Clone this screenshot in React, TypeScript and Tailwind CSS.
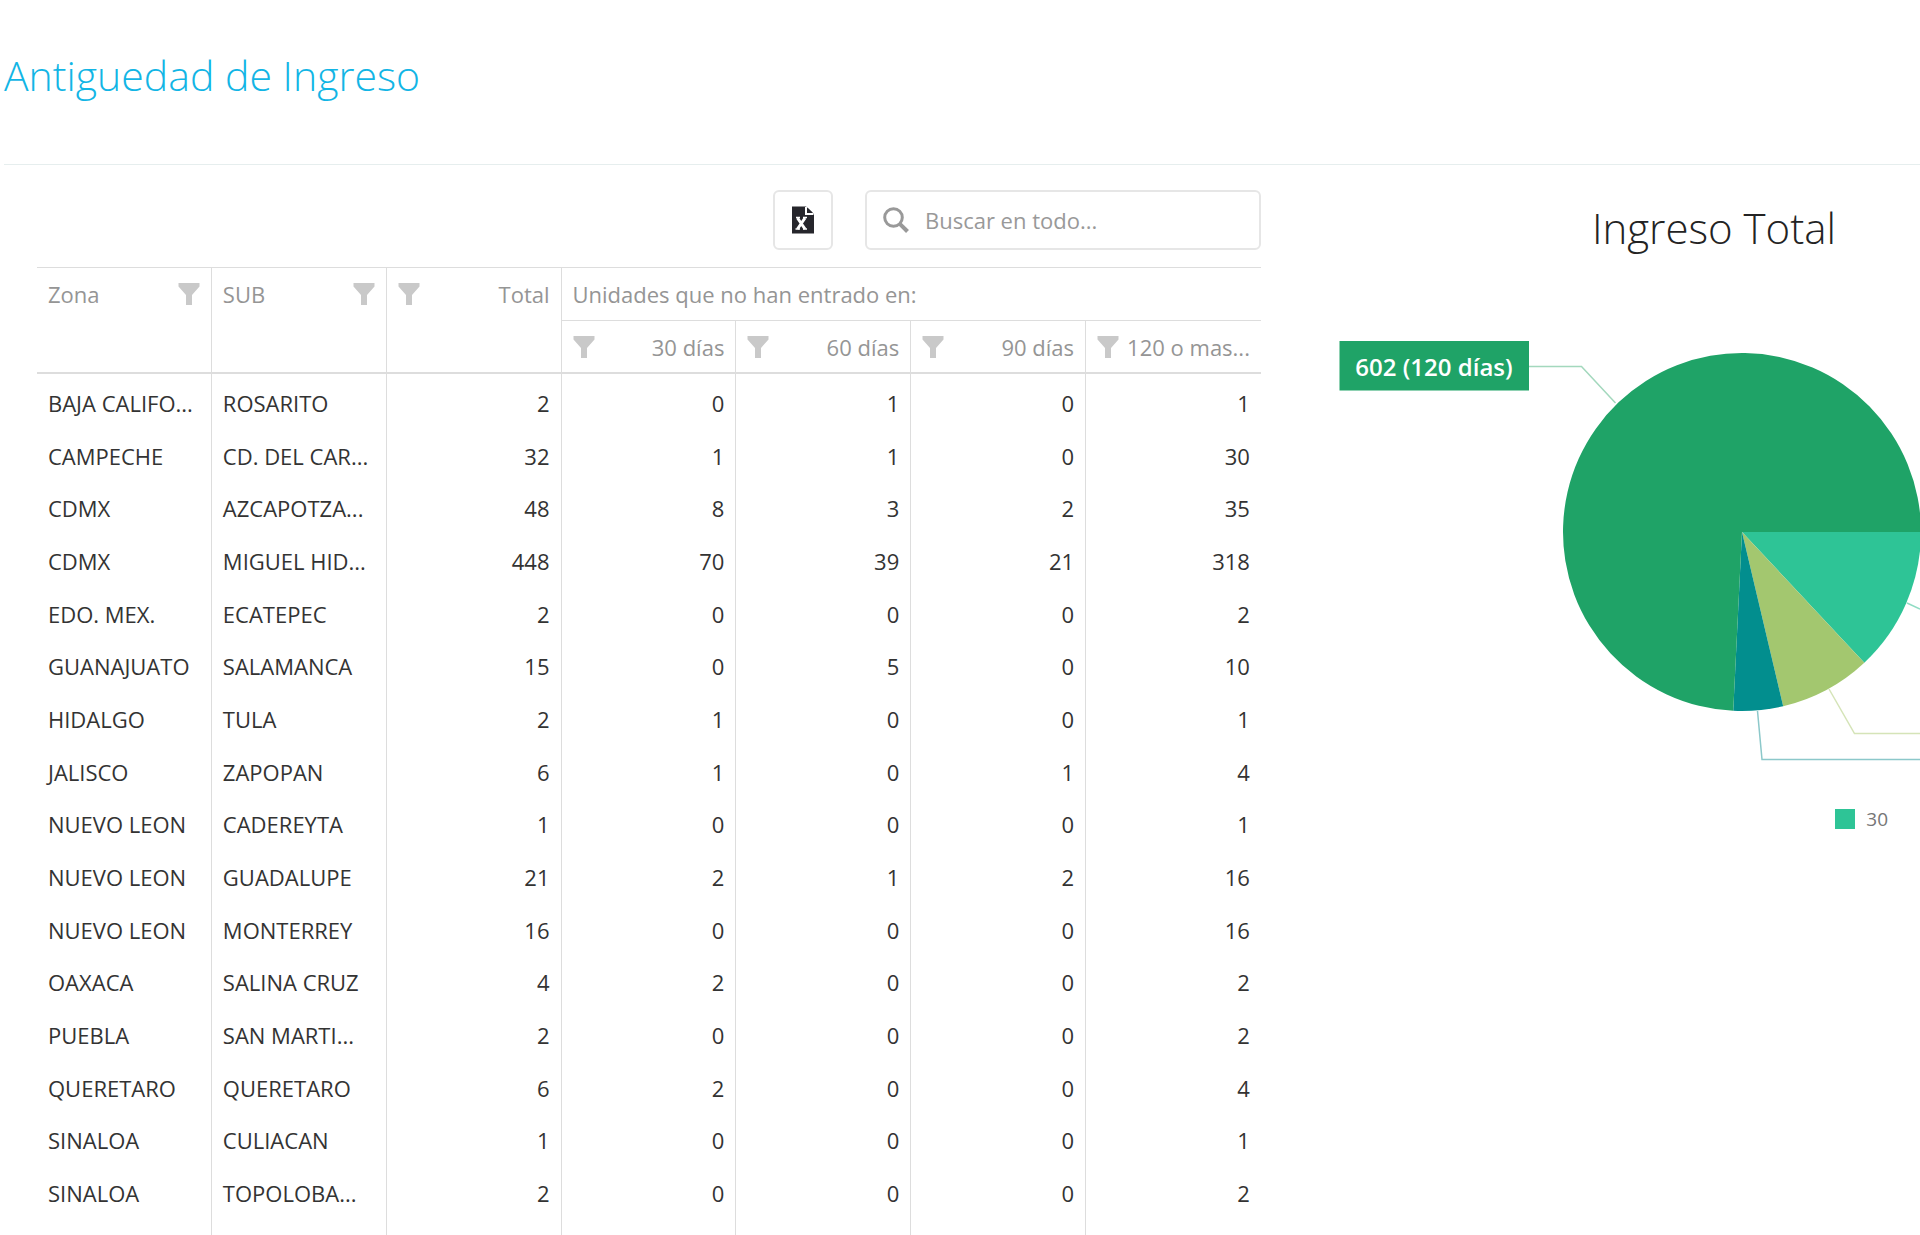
import { useState } from "react";

interface Row {
  zona: string;
  sub: string;
  values: number[];
}

const rows: Row[] = [
  { zona: "BAJA CALIFO...", sub: "ROSARITO", values: [2, 0, 1, 0, 1] },
  { zona: "CAMPECHE", sub: "CD. DEL CAR...", values: [32, 1, 1, 0, 30] },
  { zona: "CDMX", sub: "AZCAPOTZA...", values: [48, 8, 3, 2, 35] },
  { zona: "CDMX", sub: "MIGUEL HID...", values: [448, 70, 39, 21, 318] },
  { zona: "EDO. MEX.", sub: "ECATEPEC", values: [2, 0, 0, 0, 2] },
  { zona: "GUANAJUATO", sub: "SALAMANCA", values: [15, 0, 5, 0, 10] },
  { zona: "HIDALGO", sub: "TULA", values: [2, 1, 0, 0, 1] },
  { zona: "JALISCO", sub: "ZAPOPAN", values: [6, 1, 0, 1, 4] },
  { zona: "NUEVO LEON", sub: "CADEREYTA", values: [1, 0, 0, 0, 1] },
  { zona: "NUEVO LEON", sub: "GUADALUPE", values: [21, 2, 1, 2, 16] },
  { zona: "NUEVO LEON", sub: "MONTERREY", values: [16, 0, 0, 0, 16] },
  { zona: "OAXACA", sub: "SALINA CRUZ", values: [4, 2, 0, 0, 2] },
  { zona: "PUEBLA", sub: "SAN MARTI...", values: [2, 0, 0, 0, 2] },
  { zona: "QUERETARO", sub: "QUERETARO", values: [6, 2, 0, 0, 4] },
  { zona: "SINALOA", sub: "CULIACAN", values: [1, 0, 0, 0, 1] },
  { zona: "SINALOA", sub: "TOPOLOBA...", values: [2, 0, 0, 0, 2] },
];

const dayColumns = ["30 días", "60 días", "90 días", "120 o mas..."];

// Angles in degrees, clockwise from the right
const slices = [
  { color: "#2ec496", from: 0, to: 46.9 },
  { color: "#a3c76f", from: 46.9, to: 76.7 },
  { color: "#028e8e", from: 76.7, to: 92.8 },
  { color: "#1fa367", from: 92.8, to: 360 },
];

function slicePath(cx: number, cy: number, r: number, from: number, to: number): string {
  const point = (deg: number) => {
    const rad = (deg * Math.PI) / 180;
    return `${cx + r * Math.cos(rad)} ${cy + r * Math.sin(rad)}`;
  };
  return `M${cx} ${cy}L${point(from)}A${r} ${r} 0 ${to - from > 180 ? 1 : 0} 1 ${point(to)}Z`;
}

function FilterButton({ column }: { column: string }) {
  return (
    <button type="button" aria-label={`Filtrar ${column}`} className="shrink-0">
      <svg viewBox="0 0 22 22" className="size-[22px]" fill="#c9c9c9" aria-hidden="true">
        <path d="M0.5 0H21.5V3.5L14 12V22H8V12L0.5 3.5Z" />
      </svg>
    </button>
  );
}

function ExcelIcon() {
  return (
    <svg viewBox="0 0 22 28" className="h-7 w-[22px]" aria-hidden="true">
      <path d="M0 0.5H14L22 8V27.5H0Z" fill="#26262c" />
      <path d="M14 1V8H21.5" fill="none" stroke="#fff" strokeWidth="2" />
      <path d="M15.3 1.5V6.7H20.8Z" fill="#26262c" />
      <path d="M5.5 12L13 23M13 12L5.5 23" fill="none" stroke="#fff" strokeWidth="3" />
      <path d="M3.5 23H8M11 23H15M4 11.5H8M11 11.5H15" fill="none" stroke="#fff" strokeWidth="1.5" />
    </svg>
  );
}

function SearchIcon() {
  return (
    <svg viewBox="0 0 26 26" className="size-[26px]" fill="none" stroke="#999" aria-hidden="true">
      <circle cx="10.5" cy="10.5" r="8.8" strokeWidth="3" />
      <path d="M16.8 16.8L24.5 24.5" strokeWidth="4" />
    </svg>
  );
}

function NumberHeader({ label }: { label: string }) {
  return (
    <div className="flex items-center justify-between">
      <FilterButton column={label} />
      <span>{label}</span>
    </div>
  );
}

function Grid() {
  return (
    <table className="w-full table-fixed border-separate border-spacing-0 text-[22px] leading-[28px] whitespace-nowrap">
      <thead className="text-[#959595] [&_th]:border-[#dddddd] [&_th]:px-[11px] [&_th]:pt-3 [&_th]:pb-[11px] [&_th]:font-normal">
        <tr className="h-[53px] align-top">
          <th rowSpan={2} className="border-t border-r border-b-2">
            <div className="flex items-center justify-between">
              <span>Zona</span>
              <FilterButton column="Zona" />
            </div>
          </th>
          <th rowSpan={2} className="border-t border-r border-b-2">
            <div className="flex items-center justify-between">
              <span>SUB</span>
              <FilterButton column="SUB" />
            </div>
          </th>
          <th rowSpan={2} className="border-t border-r border-b-2">
            <NumberHeader label="Total" />
          </th>
          <th colSpan={4} className="border-t text-left">
            Unidades que no han entrado en:
          </th>
        </tr>
        <tr className="h-[54px] align-top">
          {dayColumns.map((label) => (
            <th key={label} className="border-t border-r border-b-2 last:border-r-0">
              <NumberHeader label={label} />
            </th>
          ))}
        </tr>
      </thead>
      <tbody className="text-[#333333] [&_td]:border-[#dddddd] [&_td]:px-[11px] [&_td]:pt-1">
        {rows.map((row) => (
          <tr key={row.zona + row.sub} className="h-[53px] nth-[3n]:h-[52px]">
            <td className="border-r">{row.zona}</td>
            <td className="border-r">{row.sub}</td>
            {row.values.map((value, i) => (
              <td key={i} className="border-r text-right last:border-r-0">
                {value}
              </td>
            ))}
          </tr>
        ))}
        <tr className="h-[18px]" aria-hidden="true">
          {[0, 1, 2, 3, 4, 5, 6].map((i) => (
            <td key={i} className="border-r last:border-r-0" />
          ))}
        </tr>
      </tbody>
    </table>
  );
}

function PieChart() {
  return (
    <svg
      viewBox="0 0 600 440"
      className="h-[440px] w-[600px] shrink-0"
      role="img"
      aria-label="Ingreso Total: 602 (120 días)"
    >
      {slices.map((slice) => (
        <path key={slice.color} d={slicePath(422, 191, 179, slice.from, slice.to)} fill={slice.color} />
      ))}
      <g fill="none" strokeWidth="1.5">
        <path d="M209 25.5H261.5L295.5 62" stroke="#a3d8bd" />
        <path d="M587 262L600 268" stroke="#8fdcc3" />
        <path d="M509 348L534.5 392.5H600" stroke="#d5e4b8" />
        <path d="M437.5 370L442 418.5H600" stroke="#8cc8ca" />
      </g>
      <rect x="19.5" y="0" width="189.5" height="49.5" fill="#1fa367" />
      <text x="114" y="35" textAnchor="middle" fill="#fff" className="text-[24px] font-semibold">
        602 (120 días)
      </text>
    </svg>
  );
}

export default function App() {
  const [query, setQuery] = useState("");

  return (
    <div className="min-h-screen overflow-hidden bg-white font-['Open_Sans','Noto_Sans',sans-serif]">
      <header className="ml-1 flex h-[165px] border-b border-[#e6eeee] pt-[47px]">
        <h1 className="text-[41px] leading-[56px] font-light text-[#12b5e5]">Antiguedad de Ingreso</h1>
      </header>

      <main className="flex pl-[37px]">
        <section className="w-[65%] shrink-0">
          {/* Toolbar */}
          <div className="flex justify-end gap-8 pt-[25px] pb-[17px]">
            <button
              type="button"
              aria-label="Exportar a Excel"
              className="flex size-[60px] items-center justify-center rounded-md border-2 border-[#e6e6e6]"
            >
              <ExcelIcon />
            </button>
            <label className="flex h-[60px] w-[396px] items-center gap-4 rounded-md border-2 border-[#e6e6e6] px-4">
              <SearchIcon />
              <input
                type="text"
                aria-label="Buscar en todo"
                placeholder="Buscar en todo..."
                value={query}
                onChange={(e) => setQuery(e.target.value)}
                className="min-w-0 flex-1 text-[22px] leading-[30px] outline-none placeholder:text-[#999999]"
              />
            </label>
          </div>
          <Grid />
        </section>

        <section className="min-w-0 flex-1 overflow-hidden pt-8 pl-[59px]">
          <h2 className="pl-[188px] text-center text-[42px] leading-[62px] font-light whitespace-nowrap text-[#232323]">
            Ingreso Total
          </h2>
          <div className="mt-[82px] flex">
            <PieChart />
          </div>
          <div className="mt-6 flex items-center justify-end gap-[11px] pr-8 text-[19px] leading-[28px] text-[#767676]">
            <span className="size-5 bg-[#2ec496]" />
            30
          </div>
        </section>
      </main>
    </div>
  );
}
